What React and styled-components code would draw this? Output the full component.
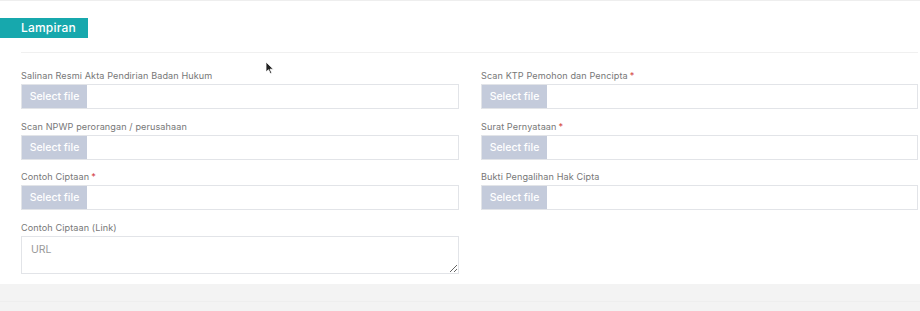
import React from "react";
import styled, { createGlobalStyle } from "styled-components";

const GlobalStyle = createGlobalStyle`
  html, body {
    margin: 0;
    padding: 0;
    background: #ffffff;
    font-family: Inter, "Noto Sans", sans-serif;
  }
`;

const Page = styled.div`
  position: relative;
  width: 920px;
  height: 311px;
  overflow: hidden;
  background: #f3f3f3;
`;

const Panel = styled.section`
  background: #ffffff;
  border-top: 1px solid #eeeeee;
  padding: 17px 2px 10px 0;
`;

const Tab = styled.div`
  width: 67px;
  height: 20px;
  padding-left: 21px;
  background: #17a8ad;
  color: #ffffff;
  font-size: 12px;
  font-weight: 500;
  line-height: 20px;
  letter-spacing: 0.2px;
`;

const Divider = styled.hr`
  margin: 14px 0 16px 21px;
  border: 0;
  border-top: 1px solid #f0f0f0;
`;

const Grid = styled.div`
  display: grid;
  grid-template-columns: 438px 437px;
  column-gap: 22px;
  row-gap: 10.5px;
  padding-left: 21px;
`;

const Field = styled.div`
  display: flex;
  flex-direction: column;
  gap: 1px;
`;

const Label = styled.label`
  font-size: 9.1px;
  line-height: 14px;
  color: #777777;
  letter-spacing: 0.1px;
`;

const Req = styled.span`
  color: #d23b3b;
  margin-left: 2px;
`;

const FileBox = styled.div`
  box-sizing: border-box;
  display: flex;
  height: 25px;
  border: 1px solid #e2e4e8;
  background: #ffffff;
`;

const FileButton = styled.span`
  width: 65px;
  display: flex;
  align-items: center;
  justify-content: center;
  background: #c4cbdb;
  color: #ffffff;
  font-size: 10.5px;
  font-weight: 500;
`;

const Area = styled.textarea`
  box-sizing: border-box;
  height: 38px;
  padding: 6px 9px;
  border: 1px solid #e2e4e8;
  font-family: Inter, "Noto Sans", sans-serif;
  font-size: 10.5px;
  color: #555;
  resize: vertical;
  &::placeholder {
    color: #9a9a9a;
  }
`;

const Footer = styled.div`
  height: 17px;
  border-bottom: 1px solid #eeeeee;
`;

const Cursor = styled.svg`
  position: absolute;
  left: 265px;
  top: 61px;
`;

const fields = [
  { label: "Salinan Resmi Akta Pendirian Badan Hukum" },
  { label: "Scan KTP Pemohon dan Pencipta", req: true },
  { label: "Scan NPWP perorangan / perusahaan" },
  { label: "Surat Pernyataan", req: true },
  { label: "Contoh Ciptaan", req: true },
  { label: "Bukti Pengalihan Hak Cipta" },
];

const App = () => {
  return (
    <Page>
      <GlobalStyle />
      <Panel>
        <Tab>Lampiran</Tab>
        <Divider />
        <Grid>
          {fields.map((f) => (
            <Field key={f.label}>
              <Label>
                {f.label}
                {f.req && <Req>*</Req>}
              </Label>
              <FileBox>
                <FileButton>Select file</FileButton>
              </FileBox>
            </Field>
          ))}
          <Field>
            <Label>Contoh Ciptaan (Link)</Label>
            <Area placeholder="URL" />
          </Field>
        </Grid>
      </Panel>
      <Footer />
      <Cursor width="10" height="14" viewBox="0 0 10 14">
        <path d="M1 1 L1 11 L3.5 8.7 L5.3 12.6 L6.8 11.9 L5 8.2 L8.4 8.2 Z" fill="#222" stroke="#fff" strokeWidth="0.8" />
      </Cursor>
    </Page>
  );
};

export default App;
